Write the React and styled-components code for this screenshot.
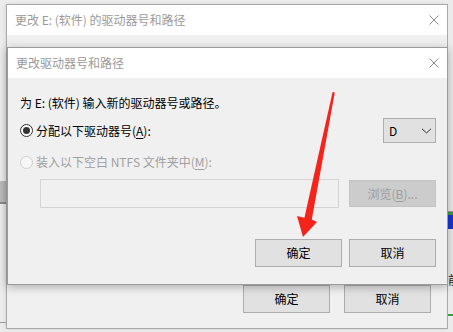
import React from "react";
import styled, { createGlobalStyle } from "styled-components";

const Global = createGlobalStyle`
  html, body { margin: 0; padding: 0; background: #efefef; }
  body { font-family: "Noto Sans CJK SC", "Noto Sans", sans-serif; }
`;

const Desktop = styled.div`
  position: relative;
  width: 453px;
  height: 332px;
  overflow: hidden;
  display: flex;
  background: #efefef;
  font-family: "Noto Sans CJK SC", "Noto Sans", sans-serif;
  font-size: 12px;
  color: #000;
`;

const Strip = styled.div`
  width: ${(p) => p.$w}px;
  flex: none;
  display: flex;
  flex-direction: column;
  overflow: hidden;
`;

const Band = styled.div`
  flex: ${(p) => (p.$h ? "none" : "1")};
  height: ${(p) => (p.$h ? `${p.$h}px` : "auto")};
  background: ${(p) => p.$c};
  overflow: hidden;
  white-space: nowrap;
  font-size: 12px;
  line-height: ${(p) => (p.$h ? `${p.$h}px` : "normal")};
  color: #222;
`;

const Center = styled.div`
  flex: 1;
  padding-top: 4px;
  display: flex;
  flex-direction: column;
`;

const Window = styled.div`
  box-sizing: border-box;
  display: flex;
  flex-direction: column;
  border: 1px solid #a8a8a8;
  background: #f0f0f0;
`;

const BackWindow = styled(Window)`
  height: 325px;
  box-shadow: 0 0 5px rgba(0, 0, 0, 0.12);
`;

const FrontWindow = styled(Window)`
  position: absolute;
  left: 7px;
  top: 47px;
  width: 441px;
  height: 238px;
  border-color: #9c9c9c;
  box-shadow: 0 2px 9px rgba(0, 0, 0, 0.28);
`;

const TitleBar = styled.div`
  height: 30px;
  flex: none;
  display: flex;
  align-items: center;
  background: #fff;
  padding: 0 8px 0 8px;
  color: #9a9a9a;
  font-size: 12px;
  line-height: 16px;
`;

const TitleText = styled.span`
  flex: 1;
`;

const CloseIcon = () => (
  <svg width="10" height="10" viewBox="0 0 10 10">
    <path d="M0.5 0.5 L9.5 9.5 M9.5 0.5 L0.5 9.5" stroke="#8c8c8c" strokeWidth="1" fill="none" />
  </svg>
);

const BackBody = styled.div`
  flex: 1;
  display: flex;
  flex-direction: column;
  justify-content: flex-end;
  padding: 0 16px 15px 0;
`;

const ButtonRow = styled.div`
  display: flex;
  justify-content: flex-end;
  gap: ${(p) => p.$gap}px;
`;

const Button = styled.div`
  box-sizing: border-box;
  width: 87px;
  height: ${(p) => (p.$h ? p.$h : 28)}px;
  display: flex;
  align-items: center;
  justify-content: center;
  background: ${(p) => (p.$disabled ? "#cccccc" : "#e1e1e1")};
  border: 1px solid ${(p) => (p.$disabled ? "#c4c4c4" : "#adadad")};
  color: ${(p) => (p.$disabled ? "#9e9e9e" : "#000")};
  font-size: 12px;
  line-height: 16px;
`;

const FrontBody = styled.div`
  flex: 1;
  display: flex;
  flex-direction: column;
  padding: 16px 11px 17px 12px;
`;

const Intro = styled.div`
  height: 18px;
  line-height: 18px;
`;

const OptionRow = styled.div`
  display: flex;
  align-items: center;
  height: ${(p) => p.$h}px;
  margin-top: ${(p) => p.$mt}px;
`;

const Radio = styled.span`
  box-sizing: border-box;
  width: 13px;
  height: 13px;
  border-radius: 50%;
  flex: none;
  display: flex;
  align-items: center;
  justify-content: center;
  border: 1px solid ${(p) => (p.$disabled ? "#cfcfcf" : "#333")};
  background: ${(p) => (p.$disabled ? "#f7f7f7" : "#fff")};
  margin-right: 3px;
  &::after {
    content: "";
    display: ${(p) => (p.$checked ? "block" : "none")};
    width: 7px;
    height: 7px;
    border-radius: 50%;
    background: #333;
  }
`;

const Label = styled.span`
  color: ${(p) => (p.$disabled ? "#a0a0a0" : "#000")};
  line-height: 18px;
  white-space: nowrap;
`;

const U = styled.span`
  text-decoration: underline;
  text-underline-offset: 2px;
`;

const Select = styled.div`
  box-sizing: border-box;
  margin-left: auto;
  width: 53px;
  height: 25px;
  display: flex;
  align-items: center;
  justify-content: space-between;
  padding: 0 3px 0 5px;
  background: #e1e1e1;
  border: 1px solid #adadad;
  line-height: 16px;
`;

const PathRow = styled.div`
  display: flex;
  align-items: center;
  gap: 10px;
  margin-top: 8px;
  padding-left: 20px;
`;

const PathInput = styled.div`
  box-sizing: border-box;
  width: 299px;
  height: 29px;
  background: #f0f0f0;
  border: 1px solid #d4d4d4;
`;

const Actions = styled(ButtonRow)`
  margin-top: auto;
`;

const ArrowLayer = styled.svg`
  position: absolute;
  left: 0;
  top: 0;
  pointer-events: none;
`;

export default function App() {
  return (
    <>
      <Global />
      <Desktop>
        <Strip $w={6}>
          <Band $h={181} $c="#ececec" />
          <Band $h={21} $c="#b9b9b9" />
          <Band $h={2} $c="#8a8a8a" />
          <Band $h={118} $c="#ececec" />
          <Band $h={1} $c="#a0a0a0" />
          <Band $c="#ececec" />
        </Strip>
        <Center>
          <BackWindow>
            <TitleBar>
              <TitleText>更改 E: (软件) 的驱动器号和路径</TitleText>
              <CloseIcon />
            </TitleBar>
            <BackBody>
              <ButtonRow $gap={14}>
                <Button>确定</Button>
                <Button>取消</Button>
              </ButtonRow>
            </BackBody>
          </BackWindow>
        </Center>
        <Strip $w={5}>
          <Band $h={211} $c="#ebebeb" />
          <Band $h={1} $c="#9a9a9a" />
          <Band $h={3} $c="#3b9a45" />
          <Band $h={14} $c="#1736d6" />
          <Band $h={44} $c="#ebebeb" />
          <Band $h={14} $c="#ebebeb">前</Band>
          <Band $h={27} $c="#ebebeb" />
          <Band $h={2} $c="#3b9a45" />
          <Band $c="#ebebeb" />
        </Strip>

        <FrontWindow>
          <TitleBar>
            <TitleText>更改驱动器号和路径</TitleText>
            <CloseIcon />
          </TitleBar>
          <FrontBody>
            <Intro>为 E: (软件) 输入新的驱动器号或路径。</Intro>
            <OptionRow $h={25} $mt={6}>
              <Radio $checked />
              <Label>
                分配以下驱动器号(<U>A</U>):
              </Label>
              <Select>
                <span>D</span>
                <svg width="11" height="6" viewBox="0 0 11 6">
                  <path d="M1 0.8 L5.5 5 L10 0.8" stroke="#333" strokeWidth="1" fill="none" />
                </svg>
              </Select>
            </OptionRow>
            <OptionRow $h={18} $mt={10}>
              <Radio $disabled />
              <Label $disabled>
                装入以下空白 NTFS 文件夹中(<U>M</U>):
              </Label>
            </OptionRow>
            <PathRow>
              <PathInput />
              <Button $disabled $h={27}>
                浏览(<U>B</U>)...
              </Button>
            </PathRow>
            <Actions $gap={7}>
              <Button>确定</Button>
              <Button>取消</Button>
            </Actions>
          </FrontBody>
        </FrontWindow>

        <ArrowLayer width="453" height="332" viewBox="0 0 453 332">
          <polygon
            points="332.6,92 334.8,92.6 311.8,219.6 317,222 303,237 297,216 304.4,217.8"
            fill="#f4231c"
          />
        </ArrowLayer>
      </Desktop>
    </>
  );
}
